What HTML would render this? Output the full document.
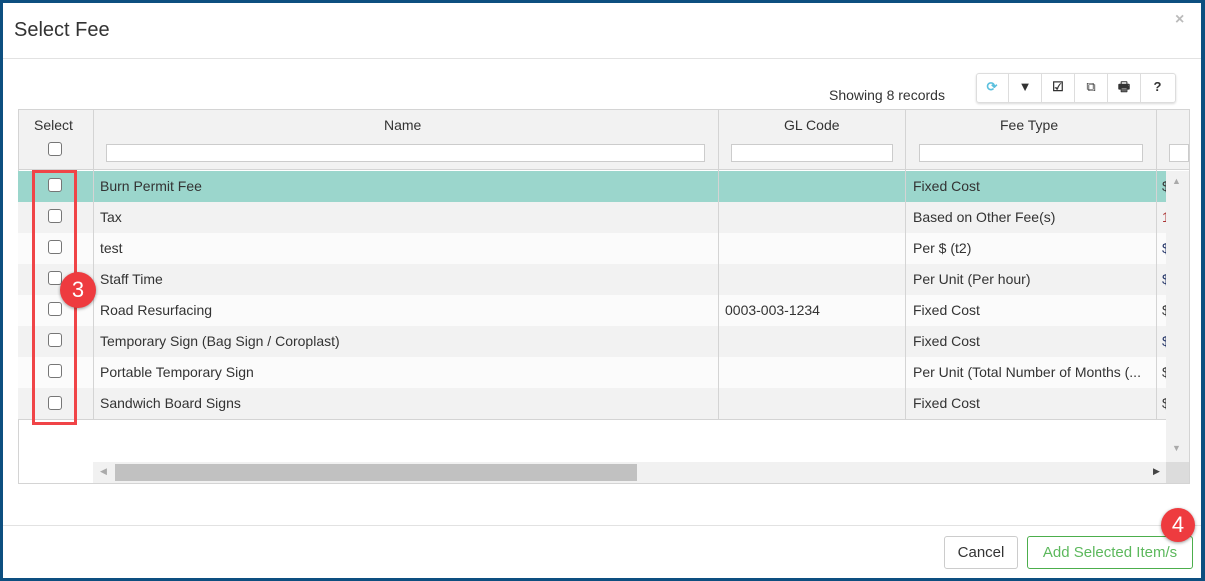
<!DOCTYPE html>
<html><head><style>
*{box-sizing:border-box;margin:0;padding:0}
body{width:1205px;height:581px;background:#0d4f80;font-family:"Liberation Sans",sans-serif;position:relative;overflow:hidden;color:#333}
.m{position:absolute;left:3px;top:3px;width:1198px;height:575px;background:#fff}
.a{position:absolute}
.t{font-size:14px}
.cb{position:absolute;width:14px;height:14px;border:1px solid #767676;border-radius:3px;background:#fff}
.row{position:absolute;left:18px;width:1148px;height:31px}
.row span{position:absolute;top:7px;font-size:14px}
.vl{position:absolute;top:109px;width:1px;background:#d4d4d4}
.tb{position:absolute;top:73px;height:30px;width:33px;border-right:1px solid #ddd;font-size:13px;text-align:center;line-height:28px;font-weight:bold}
.circ{position:absolute;border-radius:50%;background:#ee3b3f;color:#fff;font-size:22px;text-align:center;box-shadow:0 1px 3px rgba(0,0,0,.4)}
</style></head><body>
<div class="m"></div>
<div class="a" style="left:14px;top:19px;font-size:20px;color:#333">Select Fee</div>
<div class="a" style="left:1175px;top:11px;font-size:16px;color:#bbb;font-weight:bold">×</div>
<div class="a" style="left:3px;top:58px;width:1198px;height:1px;background:#e2e2e2"></div>
<div class="a t" style="left:829px;top:87px;">Showing 8 records</div>
<div class="a" style="left:976px;top:73px;width:200px;height:30px;border:1px solid #ddd;border-radius:3px;box-shadow:0 1px 2px rgba(0,0,0,.15)"></div>
<div class="tb" style="left:976px;color:#5bc0de">⟳</div>
<div class="tb" style="left:1009px">▼</div>
<div class="tb" style="left:1042px">☑</div>
<div class="tb" style="left:1075px;font-weight:normal">⧉</div>
<div class="tb" style="left:1108px">🖶</div>
<div class="tb" style="left:1141px;border:none">?</div>
<div class="a" style="left:18px;top:109px;width:1172px;height:375px;border:1px solid #d4d4d4"></div>
<div class="a" style="left:19px;top:110px;width:1170px;height:60px;background:#f2f2f2;border-bottom:1px solid #d4d4d4"></div>
<div class="a t" style="left:34px;top:117px">Select</div>
<div class="cb" style="left:48px;top:142px"></div>
<div class="a t" style="left:384px;top:117px">Name</div>
<div class="a t" style="left:784px;top:117px">GL Code</div>
<div class="a t" style="left:1000px;top:117px">Fee Type</div>
<div class="a" style="left:106px;top:144px;width:599px;height:18px;border:1px solid #ccc;background:#fff"></div>
<div class="a" style="left:731px;top:144px;width:162px;height:18px;border:1px solid #ccc;background:#fff"></div>
<div class="a" style="left:919px;top:144px;width:224px;height:18px;border:1px solid #ccc;background:#fff"></div>
<div class="a" style="left:1169px;top:144px;width:20px;height:18px;border:1px solid #ccc;background:#fff"></div>
<div class="row" style="top:171px;background:#9bd6cc"><span style="left:82px">Burn Permit Fee</span><span style="left:895px">Fixed Cost</span><span style="left:1144px">$</span></div>
<div class="row" style="top:202px;background:#f2f2f2"><span style="left:82px">Tax</span><span style="left:895px">Based on Other Fee(s)</span><span style="left:1144px;color:#a33">1</span></div>
<div class="row" style="top:233px;background:#fbfbfb"><span style="left:82px">test</span><span style="left:895px">Per $ (t2)</span><span style="left:1144px;color:#236">$</span></div>
<div class="row" style="top:264px;background:#f2f2f2"><span style="left:82px">Staff Time</span><span style="left:895px">Per Unit (Per hour)</span><span style="left:1144px;color:#236">$</span></div>
<div class="row" style="top:295px;background:#fbfbfb"><span style="left:82px">Road Resurfacing</span><span style="left:707px">0003-003-1234</span><span style="left:895px">Fixed Cost</span><span style="left:1144px">$</span></div>
<div class="row" style="top:326px;background:#f2f2f2"><span style="left:82px">Temporary Sign (Bag Sign / Coroplast)</span><span style="left:895px">Fixed Cost</span><span style="left:1144px;color:#236">$</span></div>
<div class="row" style="top:357px;background:#fbfbfb"><span style="left:82px">Portable Temporary Sign</span><span style="left:895px">Per Unit (Total Number of Months (...</span><span style="left:1144px">$</span></div>
<div class="row" style="top:388px;background:#f2f2f2;height:32px;border-bottom:1px solid #d4d4d4"><span style="left:82px">Sandwich Board Signs</span><span style="left:895px">Fixed Cost</span><span style="left:1144px">$</span></div>
<div class="vl" style="left:93px;height:311px"></div>
<div class="vl" style="left:718px;height:311px"></div>
<div class="vl" style="left:905px;height:311px"></div>
<div class="vl" style="left:1156px;height:311px"></div>
<div class="cb" style="left:48px;top:178px"></div>
<div class="cb" style="left:48px;top:209px"></div>
<div class="cb" style="left:48px;top:240px"></div>
<div class="cb" style="left:48px;top:271px"></div>
<div class="cb" style="left:48px;top:302px"></div>
<div class="cb" style="left:48px;top:333px"></div>
<div class="cb" style="left:48px;top:364px"></div>
<div class="cb" style="left:48px;top:396px"></div>
<div class="a" style="left:1166px;top:171px;width:23px;height:291px;background:#f1f1f1"></div>
<div class="a" style="left:1172px;top:176px;font-size:9px;color:#aaa">▲</div>
<div class="a" style="left:1172px;top:443px;font-size:9px;color:#aaa">▼</div>
<div class="a" style="left:93px;top:462px;width:1073px;height:21px;background:#f1f1f1"></div>
<div class="a" style="left:1166px;top:462px;width:23px;height:21px;background:#dcdcdc"></div>
<div class="a" style="left:115px;top:464px;width:522px;height:17px;background:#c1c1c1"></div>
<div class="a" style="left:100px;top:466px;font-size:9px;color:#aaa">◀</div>
<div class="a" style="left:1153px;top:466px;font-size:9px;color:#444">▶</div>
<div class="a" style="left:32px;top:170px;width:45px;height:255px;border:3px solid #f04447"></div>
<div class="circ" style="left:60px;top:272px;width:36px;height:36px;line-height:36px">3</div>
<div class="a" style="left:3px;top:525px;width:1198px;height:1px;background:#e2e2e2"></div>
<div class="a t" style="left:944px;top:536px;width:74px;height:33px;border:1px solid #ccc;border-radius:3px;text-align:center;line-height:31px;font-size:15px">Cancel</div>
<div class="a t" style="left:1027px;top:536px;width:166px;height:33px;border:1px solid #4cae4c;border-radius:3px;text-align:center;line-height:31px;font-size:15px;color:#5cb85c">Add Selected Item/s</div>
<div class="circ" style="left:1161px;top:508px;width:34px;height:34px;line-height:34px">4</div>
</body></html>
